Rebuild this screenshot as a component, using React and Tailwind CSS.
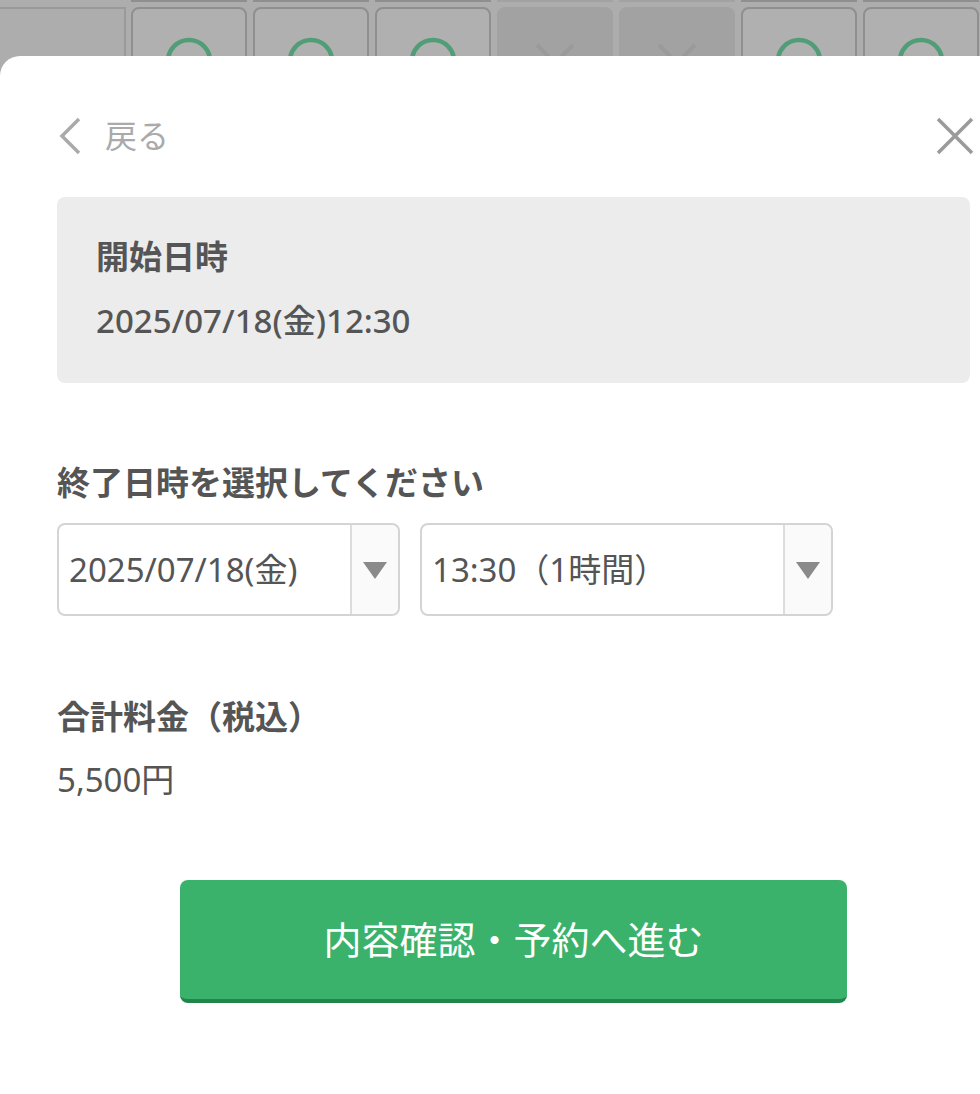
import React from 'react';

const font = { fontFamily: '"Noto Sans", "Noto Sans CJK JP", sans-serif' };

const cells = ['ok', 'ok', 'ok', 'ng', 'ng', 'ok', 'ok'];

const Cell = ({ kind }) => {
  if (kind === 'ng') {
    return (
      <div className="w-[116px] h-[80px] shrink-0 rounded-lg bg-[#a2a2a2]">
        <svg width="116" height="80" viewBox="0 0 116 80">
          <path d="M40 38 L76 74 M76 38 L40 74" stroke="#9a9a9a" strokeWidth="4" fill="none" />
        </svg>
      </div>
    );
  }
  return (
    <div className="w-[116px] h-[80px] shrink-0 rounded-lg border-2 border-[#8f8f8f] bg-[#b0b0b0]">
      <svg width="112" height="76" viewBox="0 0 112 76">
        <circle cx="56" cy="52" r="21" stroke="#519d78" strokeWidth="4.5" fill="none" />
      </svg>
    </div>
  );
};

const Select = ({ value, width }) => (
  <div className={`flex h-[93px] ${width} rounded-lg border-2 border-[#d4d4d4] bg-white`}>
    <div className="flex flex-1 items-center pl-[10px] text-[33px] text-[#555]">{value}</div>
    <div className="flex w-[48px] items-center justify-center border-l-2 border-[#dcdcdc] bg-[#fafafa] rounded-r-lg">
      <svg width="24" height="20" viewBox="0 0 24 20">
        <path d="M0 2 L24 2 L12 19 Z" fill="#8a8a8a" />
      </svg>
    </div>
  </div>
);

export default function App() {
  return (
    <div className="flex h-[1094px] w-full flex-col overflow-hidden bg-[#adadad]" style={font}>
      {/* calendar behind the sheet */}
      <div className="relative h-[56px] shrink-0 overflow-hidden">
        <div className="flex h-[2px]">
          <div className="w-[131px] shrink-0" />
          <div className="flex gap-[6px]">
            {cells.map((c, i) => (
              <div key={i} className={`w-[116px] h-[2px] shrink-0 ${c === 'ng' ? 'bg-[#a2a2a2]' : 'bg-[#8f8f8f]'}`} />
            ))}
          </div>
        </div>
        <div className="flex">
          <div className="mt-[5px] h-[80px] w-[126px] shrink-0 border-t-2 border-r-2 border-[#9a9a9a]" />
          <div className="ml-[5px] mt-[5px] flex gap-[6px]">
            {cells.map((c, i) => <Cell key={i} kind={c} />)}
          </div>
        </div>
      </div>

      {/* bottom sheet */}
      <div className="flex-1 rounded-tl-[20px] bg-white pl-[57px] pr-[10px] text-[#555]">
        <div className="flex items-center justify-between pt-[60px]">
          <div className="flex items-center">
            <svg width="26" height="40" viewBox="0 0 26 40" className="mr-[22px]">
              <path d="M22 3 L5 20 L22 37" stroke="#aaa" strokeWidth="3.5" fill="none" />
            </svg>
            <span className="text-[32px] leading-none text-[#aaa]">戻る</span>
          </div>
          <svg width="40" height="40" viewBox="0 0 40 40" className="mr-[-5px]">
            <path d="M3 3 L37 37 M37 3 L3 37" stroke="#9a9a9a" strokeWidth="3.5" fill="none" />
          </svg>
        </div>

        <div className="mt-[41px] w-[913px] rounded-lg bg-[#ececec] pl-[39px] pt-[39px] pb-[41px]">
          <div className="text-[33px] font-bold leading-[42px]">開始日時</div>
          <div className="mt-[22px] text-[33px] font-medium leading-[42px]">2025/07/18(金)12:30</div>
        </div>

        <div className="mt-[79px] text-[33px] font-bold leading-[42px]">終了日時を選択してください</div>
        <div className="mt-[19px] flex gap-[20px]">
          <Select value="2025/07/18(金)" width="w-[343px]" />
          <Select value="13:30（1時間）" width="w-[413px]" />
        </div>

        <div className="mt-[80px] text-[33px] font-bold leading-[42px]">合計料金（税込）</div>
        <div className="mt-[21px] text-[33px] leading-[42px]">5,500円</div>

        <div className="mt-[79px] flex w-[913px] justify-center">
          <button className="flex h-[123px] w-[667px] items-center justify-center rounded-lg border-b-[4px] border-[#22854a] bg-[#3bb26b] text-[38px] text-white">
            内容確認・予約へ進む
          </button>
        </div>
      </div>
    </div>
  );
}
